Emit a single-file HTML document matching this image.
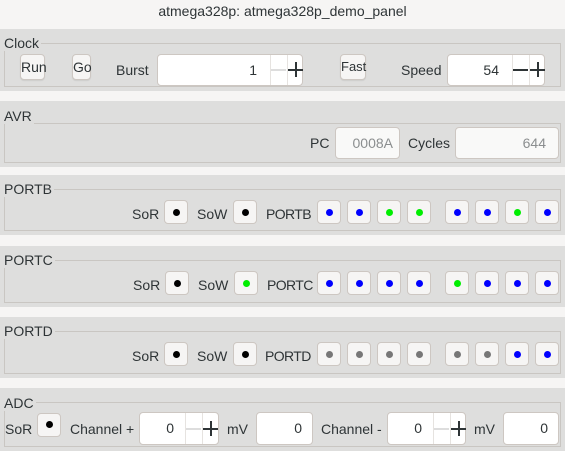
<!DOCTYPE html>
<html><head><style>
*{margin:0;padding:0;box-sizing:border-box}
body{width:565px;height:451px;background:#f6f5f4;position:relative;overflow:hidden;font-family:"Liberation Sans","DejaVu Sans",sans-serif;font-size:14px;color:#2e3436}
.a{position:absolute}
.sec{position:absolute;left:0;width:565px;background:#dededd}
.fr{position:absolute;left:4px;width:557px;border:1px solid #c9c6c2}
.lg{position:absolute;left:4px;background:#dededd;padding-right:2px;line-height:16px}
.t{position:absolute;line-height:16px}
.btn{position:absolute;background:#f6f5f4;border:1px solid #cdc7c2;border-radius:4px;box-shadow:0 1px 1px rgba(0,0,0,.08);text-align:center;line-height:24px}
.led{position:absolute;width:24px;height:24px;background:#f6f5f4;border:1px solid #cdc7c2;border-radius:4px}
.led i{position:absolute;left:8px;top:8px;width:7px;height:7px;border-radius:50%}
.in{position:absolute;background:#fff;border:1px solid #cdc7c2;border-radius:4px;text-align:right;line-height:30px;padding-right:10px}
.ro{background:#f9f9f8;color:#8b8e8f}
.sp{position:absolute;top:0;height:100%;width:1px;background:#e6e3e0}
.pm{position:absolute;top:0;width:17px;height:100%}
.pm:before{content:"";position:absolute;left:1px;top:50%;width:15px;height:2px;margin-top:-1px;background:currentColor}
.pl:after{content:"";position:absolute;left:8px;top:50%;width:2px;height:15px;margin-top:-8px;background:currentColor}
</style></head><body>
<div class="a" style="left:0;width:565px;text-align:center;top:3px;font-size:14px">atmega328p: atmega328p_demo_panel</div>

<!-- Clock -->
<div class="sec" style="top:29px;height:62px"></div>
<div class="fr" style="top:43px;height:44px"></div>
<div class="lg" style="top:35px">Clock</div>
<div class="btn" style="left:20px;top:54px;width:25px;height:26px">Run</div>
<div class="btn" style="left:72px;top:54px;width:19px;height:26px">Go</div>
<div class="t" style="left:116px;top:62px">Burst</div>
<div class="in" style="left:157px;top:54px;width:146px;height:32px;padding-right:0"><span style="position:absolute;right:45px">1</span><div class="sp" style="left:112px"></div><div class="sp" style="left:129px"></div><div class="pm" style="left:112px;color:#ddd"></div><div class="pm pl" style="left:129px;color:#2e3436"></div></div>
<div class="btn" style="left:340px;top:54px;width:26px;height:26px;font-size:13px">Fast</div>
<div class="t" style="left:401px;top:62px">Speed</div>
<div class="in" style="left:447px;top:54px;width:98px;height:32px;padding-right:0"><span style="position:absolute;right:45px">54</span><div class="sp" style="left:64px"></div><div class="sp" style="left:81px"></div><div class="pm" style="left:64px;color:#2e3436"></div><div class="pm pl" style="left:81px;color:#2e3436"></div></div>

<!-- AVR -->
<div class="sec" style="top:101px;height:66px"></div>
<div class="fr" style="top:123px;height:40px"></div>
<div class="lg" style="top:108px">AVR</div>
<div class="t" style="left:310px;top:135px">PC</div>
<div class="in ro" style="left:335px;top:127px;width:65px;height:32px;padding-right:6px">0008A</div>
<div class="t" style="left:408px;top:135px">Cycles</div>
<div class="in ro" style="left:455px;top:127px;width:104px;height:32px;padding-right:12px">644</div>

<!-- PORTB -->
<div class="sec" style="top:175px;height:60px"></div>
<div class="fr" style="top:189px;height:42px"></div>
<div class="lg" style="top:181px">PORTB</div>
<div class="t" style="left:132px;top:206px">SoR</div>
<div class="led" style="left:164px;top:200px"><i style="background:#000"></i></div>
<div class="t" style="left:197px;top:206px">SoW</div>
<div class="led" style="left:233px;top:200px"><i style="background:#000"></i></div>
<div class="t" style="left:266px;top:206px;letter-spacing:-0.6px">PORTB</div>
<div class="led" style="left:317px;top:200px"><i style="background:#00f"></i></div>
<div class="led" style="left:347px;top:200px"><i style="background:#00f"></i></div>
<div class="led" style="left:377px;top:200px"><i style="background:#0e0"></i></div>
<div class="led" style="left:407px;top:200px"><i style="background:#0e0"></i></div>
<div class="led" style="left:445px;top:200px"><i style="background:#00f"></i></div>
<div class="led" style="left:475px;top:200px"><i style="background:#00f"></i></div>
<div class="led" style="left:505px;top:200px"><i style="background:#0e0"></i></div>
<div class="led" style="left:535px;top:200px"><i style="background:#00f"></i></div>

<!-- PORTC -->
<div class="sec" style="top:246px;height:61px"></div>
<div class="fr" style="top:260px;height:43px"></div>
<div class="lg" style="top:252px">PORTC</div>
<div class="t" style="left:133px;top:277px">SoR</div>
<div class="led" style="left:165px;top:271px"><i style="background:#000"></i></div>
<div class="t" style="left:198px;top:277px">SoW</div>
<div class="led" style="left:234px;top:271px"><i style="background:#0e0"></i></div>
<div class="t" style="left:267px;top:277px;letter-spacing:-0.6px">PORTC</div>
<div class="led" style="left:317px;top:271px"><i style="background:#00f"></i></div>
<div class="led" style="left:347px;top:271px"><i style="background:#00f"></i></div>
<div class="led" style="left:377px;top:271px"><i style="background:#00f"></i></div>
<div class="led" style="left:407px;top:271px"><i style="background:#00f"></i></div>
<div class="led" style="left:445px;top:271px"><i style="background:#0e0"></i></div>
<div class="led" style="left:475px;top:271px"><i style="background:#00f"></i></div>
<div class="led" style="left:505px;top:271px"><i style="background:#00f"></i></div>
<div class="led" style="left:535px;top:271px"><i style="background:#00f"></i></div>

<!-- PORTD -->
<div class="sec" style="top:317px;height:61px"></div>
<div class="fr" style="top:331px;height:43px"></div>
<div class="lg" style="top:323px">PORTD</div>
<div class="t" style="left:132px;top:348px">SoR</div>
<div class="led" style="left:164px;top:342px"><i style="background:#000"></i></div>
<div class="t" style="left:197px;top:348px">SoW</div>
<div class="led" style="left:233px;top:342px"><i style="background:#000"></i></div>
<div class="t" style="left:265px;top:348px;letter-spacing:-0.6px">PORTD</div>
<div class="led" style="left:317px;top:342px"><i style="background:#777"></i></div>
<div class="led" style="left:347px;top:342px"><i style="background:#777"></i></div>
<div class="led" style="left:377px;top:342px"><i style="background:#777"></i></div>
<div class="led" style="left:407px;top:342px"><i style="background:#777"></i></div>
<div class="led" style="left:445px;top:342px"><i style="background:#777"></i></div>
<div class="led" style="left:475px;top:342px"><i style="background:#777"></i></div>
<div class="led" style="left:505px;top:342px"><i style="background:#00f"></i></div>
<div class="led" style="left:535px;top:342px"><i style="background:#00f"></i></div>

<!-- ADC -->
<div class="sec" style="top:388px;height:63px"></div>
<div class="fr" style="top:402px;height:45px"></div>
<div class="lg" style="top:395px">ADC</div>
<div class="t" style="left:5px;top:421px">SoR</div>
<div class="led" style="left:37px;top:413px"><i style="background:#000;top:7px"></i></div>
<div class="t" style="left:70px;top:421px">Channel +</div>
<div class="in" style="left:139px;top:412px;width:80px;height:33px;padding-right:0"><span style="position:absolute;right:44px">0</span><div class="sp" style="left:45px"></div><div class="sp" style="left:62px"></div><div class="pm" style="left:45px;color:#ddd"></div><div class="pm pl" style="left:62px;color:#2e3436"></div></div>
<div class="t" style="left:227px;top:421px">mV</div>
<div class="in" style="left:256px;top:412px;width:57px;height:33px">0</div>
<div class="t" style="left:321px;top:421px">Channel -</div>
<div class="in" style="left:387px;top:412px;width:79px;height:33px;padding-right:0"><span style="position:absolute;right:43px">0</span><div class="sp" style="left:45px"></div><div class="sp" style="left:62px"></div><div class="pm" style="left:45px;color:#ddd"></div><div class="pm pl" style="left:62px;color:#2e3436"></div></div>
<div class="t" style="left:474px;top:421px">mV</div>
<div class="in" style="left:503px;top:412px;width:56px;height:33px">0</div>
</body></html>
